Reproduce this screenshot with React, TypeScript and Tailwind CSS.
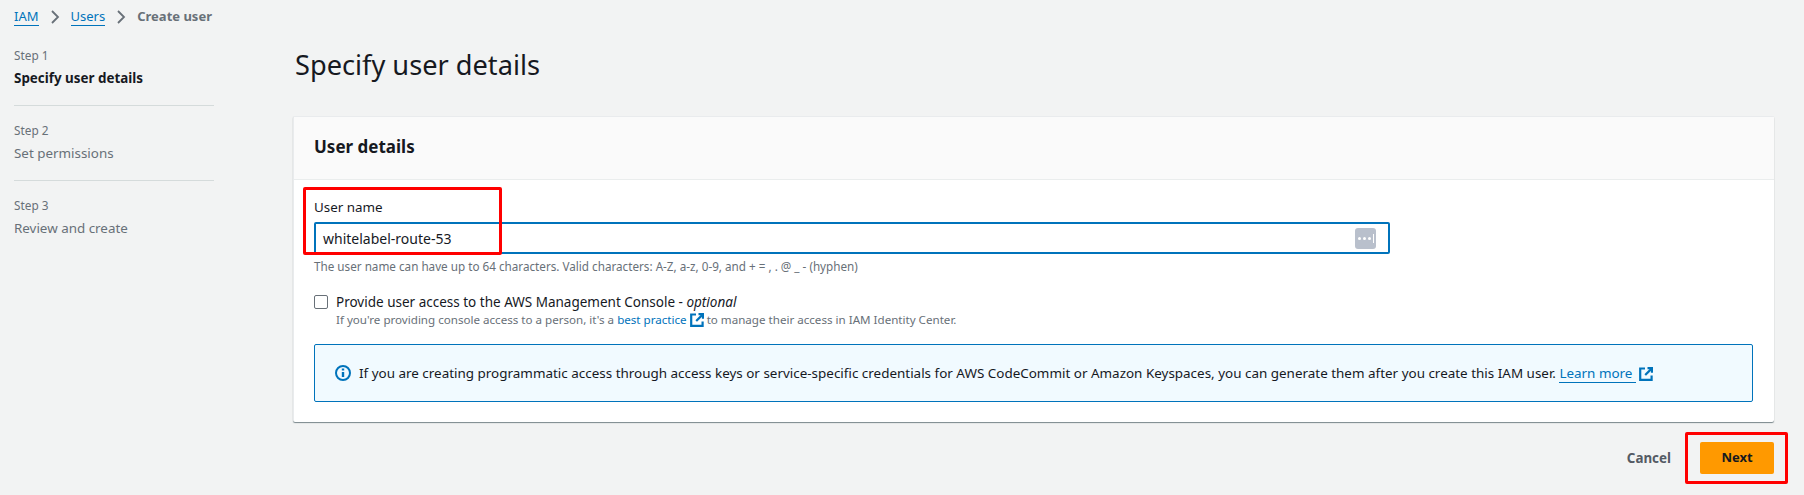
import React from 'react';

const font = "font-['Noto_Sans',sans-serif]";

const ExternalIcon = () => (
  <svg viewBox="0 0 14 14" className="inline-block w-[14px] h-[14px] align-[-3px] text-[#0073bb]" fill="none" stroke="currentColor" strokeWidth="2.2">
    <path d="M6 1.5H1.2v11.4h11.4V8.5" />
    <path d="M8.5 1.2h4.5v4.5" />
    <path d="M12.6 1.6 6.2 8" />
  </svg>
);

const InfoIcon = () => (
  <svg viewBox="0 0 16 16" className="w-4 h-4 shrink-0 text-[#0073bb]" fill="none" stroke="currentColor" strokeWidth="2">
    <circle cx="8" cy="8" r="7" />
    <path d="M8 7v5" strokeWidth="2.4" />
    <path d="M8 3.5v2" strokeWidth="2.4" />
  </svg>
);

const Chevron = () => (
  <svg viewBox="0 0 10 14" className="w-[10px] h-[14px] text-[#687078]" fill="none" stroke="currentColor" strokeWidth="1.8">
    <path d="m2 1 6 6-6 6" />
  </svg>
);

const Step = ({ label, title, active = false, last = false }: { label: string, title: string, active?: boolean, last?: boolean }) => (
  <div className={last ? '' : 'border-b border-[#d5dbdb] h-[59px]'}>
    <p className="text-[11.8px] leading-4 text-[#687078]">{label}</p>
    <p className={`mt-[5px] text-[13.4px] leading-5 ${active ? 'font-bold text-[#16191f]' : 'text-[#687078]'}`}>{title}</p>
  </div>
);

const App: React.FC = () => {
  return (
    <div className={`${font} w-[1804px] h-[495px] overflow-hidden bg-[#f2f3f3] text-[#16191f]`}>
      <nav className="flex items-center h-[33px] pl-[14px] text-[13px]">
        <a className="text-[#0073bb] border-b border-[#0073bb] leading-[18px]">IAM</a>
        <span className="mx-[11px]"><Chevron /></span>
        <a className="text-[#0073bb] border-b border-[#0073bb] leading-[18px]">Users</a>
        <span className="mx-[11px]"><Chevron /></span>
        <span className="font-bold text-[#687078]">Create user</span>
      </nav>
      <div className="flex">
        <aside className="w-[200px] ml-[14px] mr-[79px] pt-[14px] flex flex-col gap-4">
          <Step label="Step 1" title="Specify user details" active />
          <Step label="Step 2" title="Set permissions" />
          <Step label="Step 3" title="Review and create" last />
        </aside>
        <main className="w-[1481px]">
          <h1 className="text-[27.2px] leading-[36px] mt-[14px] ml-[2px]">Specify user details</h1>
          <section className="mt-[33px] bg-white border-l border-t border-[#e9ebed] shadow-[0_1px_1px_rgba(0,28,36,0.5)] rounded-[2px] h-[306px]">
            <header className="h-[63px] flex items-center px-5 pb-[3px] bg-[#fafafa] border-b border-[#eaeded]">
              <h2 className="text-[17px] font-bold">User details</h2>
            </header>
            <div className="relative px-5 pt-[17px]">
              <label className="block text-[13.4px] leading-5">User name</label>
              <div className="mt-[5px] w-[1076px] h-8 border-2 border-[#0073bb] rounded-[2px] flex items-center justify-between pl-[7px] pr-3 text-[14px]">
                <span className="pt-[1px]">whitelabel-route-53</span>
                <span className="flex items-center justify-center gap-[2px] w-[21px] h-[21px] rounded-[3px] bg-[#b9c0cc]">
                  <i className="w-[3px] h-[3px] rounded-full bg-white" />
                  <i className="w-[3px] h-[3px] rounded-full bg-white" />
                  <i className="w-[3px] h-[3px] rounded-full bg-white" />
                  <i className="w-px h-[9px] bg-white" />
                </span>
              </div>
              <p className="mt-1 text-[11.7px] leading-4 text-[#687078]">The user name can have up to 64 characters. Valid characters: A-Z, a-z, 0-9, and + = , . @ _ - (hyphen)</p>
              <div className="mt-[18px] flex items-start gap-[8px]">
                <span className="mt-[3px] w-[14px] h-[14px] border border-[#687078] rounded-[2px] bg-white shrink-0" />
                <div>
                  <p className="text-[13.5px] leading-5">Provide user access to the AWS Management Console - <em>optional</em></p>
                  <p className="text-[11.6px] leading-4 text-[#687078]">If you're providing console access to a person, it's a <span className="text-[#0073bb]">best practice</span> <ExternalIcon /> to manage their access in IAM Identity Center.</p>
                </div>
              </div>
              <div className="mt-4 w-[1439px] h-[58px] border border-[#0073bb] rounded-[2px] bg-[#f1faff] flex items-center gap-2 px-5 text-[13.44px]">
                <InfoIcon />
                <p>If you are creating programmatic access through access keys or service-specific credentials for AWS CodeCommit or Amazon Keyspaces, you can generate them after you create this IAM user. <a className="text-[#0073bb] border-b border-[#0073bb]">Learn more&nbsp;</a> <ExternalIcon /></p>
              </div>
              <div className="absolute left-[9px] top-[7px] w-[199px] h-[68px] border-[3px] border-[#ff0000] rounded-[2px] pointer-events-none" />
            </div>
          </section>
          <footer className="relative mt-[20px] flex items-center justify-end gap-[29px]">
            <button className="text-[13.4px] font-bold text-[#545b64]">Cancel</button>
            <button className="w-[74px] h-8 bg-[#ff9900] rounded-[2px] text-[13px] font-bold text-[#16191f]">Next</button>
            <div className="absolute right-[-14px] top-[-10px] w-[103px] h-[52px] border-[3px] border-[#ff0000] rounded-[2px] pointer-events-none" />
          </footer>
        </main>
      </div>
    </div>
  );
};

export default App;
